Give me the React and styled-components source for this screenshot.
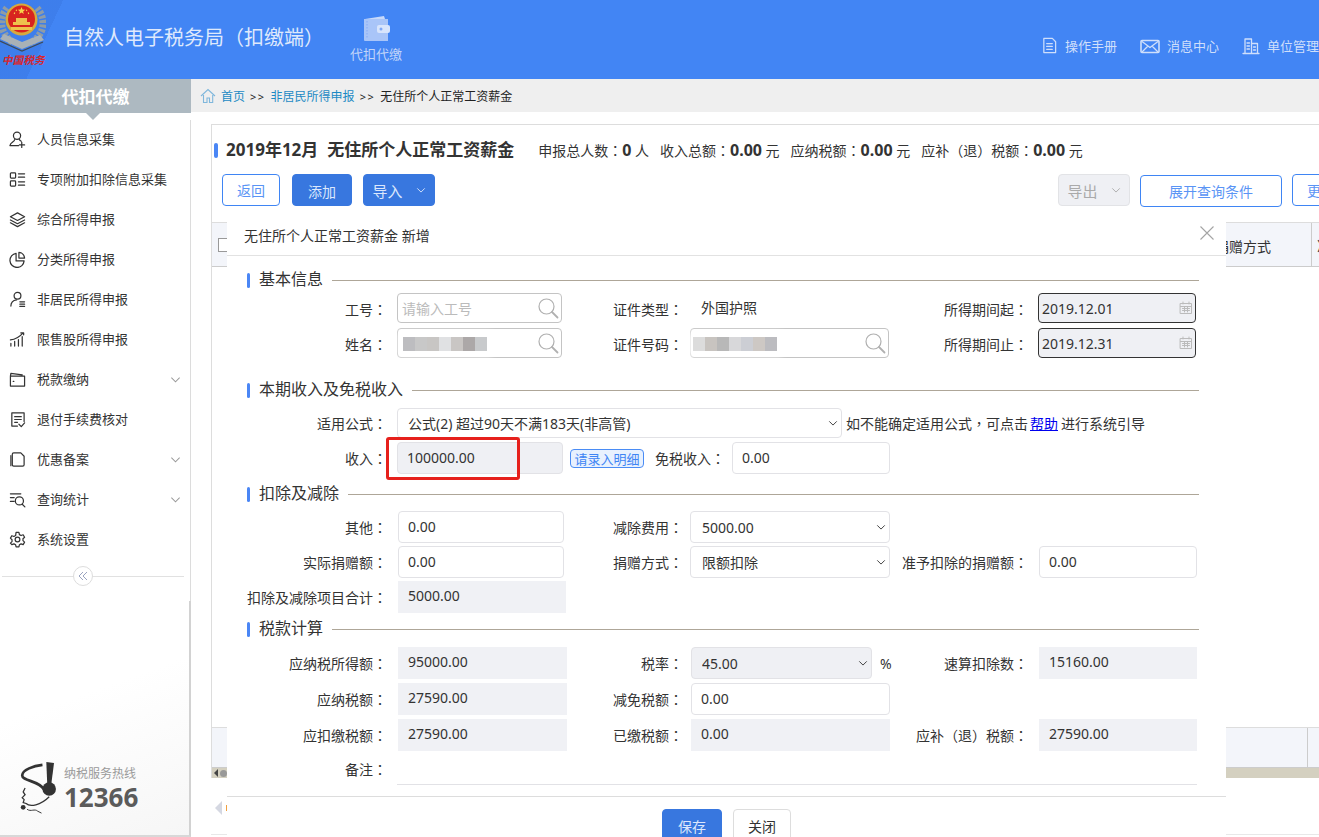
import React from "react";
import styled, { createGlobalStyle } from "styled-components";

const Global = createGlobalStyle`
  html, body { margin: 0; padding: 0; background: #fff; }
  body { font-family: "Noto Sans", "Noto Sans CJK SC", sans-serif; color: #333; font-size: 14px; overflow: hidden; }
  * { box-sizing: border-box; }
`;

const Page = styled.div`
  position: relative; width: 1319px; height: 837px; overflow: hidden; display: flex; flex-direction: column;
`;
const Header = styled.header`
  position: relative; height: 79px; flex: none; background: #4285f4; display: flex; overflow: hidden; color: #dbe7fc;
`;
const LogoBox = styled.div`
  width: 65px; flex: none; display: flex; flex-direction: column; align-items: flex-start;
  background: linear-gradient(115deg, rgba(40,90,190,.16) 62%, transparent 62%);
`;
const LogoText = styled.span`
  font-family: "Liberation Serif", "Noto Sans CJK SC", serif; font-size: 10.5px; line-height: 12px; font-weight: 700; font-style: italic;
  color: #d8262c; letter-spacing: .2px; margin: 1px 0 0 2px; white-space: nowrap;
`;
const AppTitle = styled.h1`
  margin: 0 0 0 -1px; font-size: 20px; font-weight: 400; line-height: 28px; padding-top: 24px; width: 286px; color: #dfe9fc; white-space: nowrap;
`;
const NavItem = styled.div`
  width: 52px; display: flex; flex-direction: column; align-items: center; padding-top: 16px; font-size: 13px; color: #c3d6f9; gap: 3px;
  line-height: 18px;
`;
const TopLinks = styled.div`
  margin-left: auto; display: flex; padding-top: 37px; height: 79px; width: 278px; flex: none; overflow: hidden;
`;
const TopLink = styled.div`
  display: flex; align-items: flex-start; gap: 7px; font-size: 13px; line-height: 18px; color: #cfdffb; margin-left: 23px; white-space: nowrap;
  &:first-child { margin-left: 0; }
`;
const Body = styled.div`
  flex: 1; display: flex; min-height: 0;
`;
const Sidebar = styled.aside`
  position: relative; width: 191px; flex: none; display: flex; flex-direction: column;
  background: linear-gradient(160deg, #fff 78%, #f6f6f6 100%);
`;
const SideHead = styled.div`
  position: relative; height: 34px; flex: none; background: #adb9c1; color: #fff; font-size: 17px; font-weight: 700;
  text-align: center; line-height: 34px; padding-top: 1px; margin-bottom: 7px;
  &::after {
    content: ""; position: absolute; left: 86px; top: 34px; border: 7px solid transparent; border-top-color: #adb9c1; border-bottom: 0;
  }
`;
const SideList = styled.nav`
  border-right: 1px solid #dcdcdc; height: 482px; flex: none;
`;
const SideRow = styled.div`
  height: 40px; display: flex; align-items: center; padding: 0 0 4px 9px; font-size: 13px; color: #333; gap: 11px;
  & > svg:first-child { flex: none; margin-top: 2px; }
`;
const RowChevron = styled.span`
  margin: 2px 9px 0 auto; display: flex; color: #999;
`;
const Collapse = styled.div`
  position: relative; height: 1px; margin: 16px 6px 0 2px; background: #e1e1e1;
`;
const CollapseBtn = styled.div`
  position: absolute; left: 71px; top: -10px; width: 20px; height: 20px; border-radius: 50%; background: #fff; border: 1px solid #ddd;
  color: #9aa3c0; display: flex; align-items: center; justify-content: center;
`;
const SideFoot = styled.div`
  flex: 1; border-right: 2px solid #d2d2d2; border-bottom: 2px solid #d8d8d8; display: flex; align-items: flex-end;
  padding: 0 0 19px 20px; margin-top: -1px; gap: 1px;
`;
const Hotline = styled.div`
  display: flex; flex-direction: column; margin-bottom: 8px;
  color: #9a9a9a; font-size: 12px; line-height: 14px; white-space: nowrap;
  & strong { font-size: 26px; line-height: 22px; color: #5b5b5b; font-family: "Open Sans", sans-serif; font-weight: 700; margin-top: 5px; }
`;
const Main = styled.main`
  flex: 1; min-width: 0; display: flex; flex-direction: column; overflow: hidden;
`;
const Crumbs = styled.div`
  height: 33px; flex: none; background: #efefef; display: flex; align-items: center; padding: 1px 0 0 9px; font-size: 12px; gap: 5px; white-space: nowrap;
`;
const CrumbLink = styled.span` color: #1c8ac4; `;
const CrumbSep = styled.span` color: #222; letter-spacing: 1.5px; font-size: 11px; `;
const CrumbNow = styled.span` color: #222; `;
const Panel = styled.section`
  margin: 12px 0 0 20px; flex: none; width: 1128px; display: flex; flex-direction: column;
`;
const PanelBox = styled.div`
  height: 654px; border-top: 1px solid #ddd; border-left: 1px solid #ddd; display: flex; flex-direction: column;
`;
const PanelTitle = styled.div`
  height: 49px; flex: none; display: flex; align-items: center; white-space: nowrap; padding-top: 1px;
  &::before { content: ""; width: 4px; height: 15px; margin: 0 8px 0 2px; background: #4a86f5; border-radius: 2px; }
`;
const Heading = styled.h2`
  margin: 0 24px 0 0; font-size: 17px; font-weight: 700; color: #333; line-height: 24px;
`;
const Stat = styled.span`
  font-size: 14px; margin-right: 11px; color: #333; margin-top: -1px;
  & b { font-size: 16px; font-weight: 700; }
`;
const Toolbar = styled.div`
  display: flex; height: 33px; flex: none; padding-left: 10px; gap: 12px;
`;
const Btn = styled.button`
  height: ${p => p.$h || 32}px; width: ${p => p.$w}px; border-radius: 4px; font: inherit; font-size: ${p => p.$fs || 14}px; padding: ${p => p.$pt || 0}px 0 0; flex: none;
  display: inline-flex; align-items: center; justify-content: center; gap: 13px;
  border: 1px solid ${p => p.$kind === "solid" ? "#3877df" : p.$kind === "off" ? "#e2e3e6" : p.$kind === "plain" ? "#ddd" : "#3f85f4"};
  background: ${p => p.$kind === "solid" ? "#3877df" : p.$kind === "off" ? "#eff0f4" : "#fff"};
  color: ${p => p.$kind === "solid" ? "#dbe7fc" : p.$kind === "off" ? "#aaa" : p.$kind === "plain" ? "#333" : "#5a94f5"};
  margin-left: ${p => p.$ml || 0}px; margin-top: ${p => p.$mt || 0}px;
`;
const TableHead = styled.div`
  margin-top: 15px; height: 45px; flex: none; background: #f3f5fa; border-top: 1px solid #ddd; border-bottom: 1px solid #ccc;
  display: flex; align-items: center; font-size: 14px; white-space: nowrap;
`;
const Check = styled.span`
  width: 14px; height: 14px; border: 1px solid #999; background: #fff; margin-left: 6px; flex: none;
`;
const HeadCell = styled.span`
  margin-left: 983px; width: 97px; height: 100%; border-right: 1px solid #ccc; display: flex; align-items: center; padding-top: 2px; flex: none;
  justify-content: flex-end; padding-right: 40px;
`;
const HeadCellNext = styled.span` margin-left: 5px; `;
const TableBody = styled.div` flex: 1; `;
const TableFoot = styled.div`
  height: 41px; flex: none; background: #f3f5fa; border-top: 1px solid #ddd; border-bottom: 1px solid #ccc; display: flex; justify-content: flex-end;
  padding-right: 31px;
`;
const FootCell = styled.span` width: 1px; background: #ccc; `;
const HScroll = styled.div`
  height: 10px; flex: none; background: #d4d0c0; display: flex; align-items: center; padding-left: 2px; gap: 2px;
  &::before { content: ""; border: 4px solid transparent; border-right-color: #444; border-left: 0; }
  &::after { content: ""; width: 7px; height: 7px; border-radius: 50%; background: #999; }
`;
const Pager = styled.div`
  height: 57px; display: flex; align-items: flex-start; padding: 23px 0 0 4px; gap: 4px; border-bottom: 1px solid #e8e8e8;
  &::before { content: ""; border: 7px solid transparent; border-right-color: #d5d8e2; border-left: 0; }
  &::after { content: ""; width: 3px; height: 6px; margin-top: 4px; background: #f0a040; }
`;

const Dialog = styled.div`
  position: absolute; left: 227px; top: 222px; width: 999px; height: 615px; background: #fff; display: flex; flex-direction: column;
`;
const DialogHead = styled.div`
  height: 34px; flex: none; border-bottom: 1px solid #e2e2e2; padding: 3px 0 0 17px; line-height: 22px; font-size: 14px; color: #333; position: relative;
`;
const Close = styled.span`
  position: absolute; right: 11px; top: 3px; display: flex; color: #a4a4a4;
`;
const DialogBody = styled.div`
  flex: 1; padding: 14px 27px 0 20px; border-bottom: 1px solid #ddd;
`;
const SecRow = styled.div`
  display: flex; align-items: center; height: 20px; gap: 9px; white-space: nowrap; color: #333;
  margin-top: ${p => p.$mt || 0}px; margin-bottom: ${p => p.$mb}px;
  &::before { content: ""; width: 3px; height: 15px; background: #4a86f5; border-radius: 2px; }
  &::after { content: ""; flex: 1; height: 1px; background: #aea698; }
`;
const SecText = styled.h3`
  margin: 0 0 2px; font-size: 16px; font-weight: 400; line-height: 20px;
`;
const SecTitle = ({ children, mt, mb }) => <SecRow $mt={mt} $mb={mb}><SecText>{children}</SecText></SecRow>;
const Rows = styled.div`
  display: grid; grid-template-columns: 150px 170px 123px 200px 148px 159px; row-gap: ${p => p.$gap}px; grid-auto-rows: ${p => p.$h}px; width: 950px;
  & > label { padding-top: ${p => p.$h === 30 ? 1 : 0}px; padding-bottom: ${p => p.$h === 30 ? 0 : 1}px; }
`;
const LabelText = styled.label`
  display: flex; align-items: center; justify-content: flex-end; font-size: 14px; white-space: nowrap; color: #333;
  padding-right: ${p => p.$pr ?? 10}px; margin-bottom: ${p => p.$mb || 0}px;
`;
const Colon = styled.span`
  font-family: "Noto Sans CJK TC", sans-serif;
`;
const Label = ({ children, pr, mb }) => <LabelText $pr={pr} $mb={mb}>{children}<Colon>：</Colon></LabelText>;
const Cell = styled.div`
  position: relative; grid-column: ${p => p.$span || "auto"}; width: ${p => p.$w ? p.$w + "px" : "auto"}; margin-left: ${p => p.$ml || 0}px;
  display: flex; align-items: center; min-width: 0;
`;
const Input = styled.input`
  width: 100%; height: 100%; border-radius: 4px; border: 1px solid ${p => p.$line || "#e2e2e6"}; background: ${p => p.$off ? "#eff0f4" : "#fff"};
  font: inherit; font-size: 14px; color: #333; padding: 0 ${p => p.$pad ?? 9}px ${p => p.$pb ?? 2}px; outline: none;
  &::placeholder { color: #bbb; }
`;
const Plain = styled.div`
  width: 100%; height: 100%; background: #f0f1f5; padding: 0 0 4px 10px; display: flex; align-items: center; color: #333;
`;
const ValueText = styled.span`
  padding: 0 0 2px 11px; color: #333; white-space: nowrap;
`;
const FieldIcon = styled.span`
  position: absolute; right: ${p => p.$r}px; top: 50%; transform: translateY(-50%); display: flex; color: ${p => p.$c || "#b0b0b0"}; pointer-events: none;
`;
const Select = styled.select`
  appearance: none; width: 100%; height: 100%; border-radius: 4px; border: 1px solid #e2e2e6; background: ${p => p.$off ? "#eff0f4" : "#fff"}; font: inherit; color: #333;
  padding: 0 24px 0 ${p => p.$pl ?? 10}px; outline: none;
`;
const Note = styled.span`
  font-size: 14px; white-space: nowrap; margin-left: 4px; color: #333;
  & a { color: #0000ee; text-decoration: underline; margin: 0 3px 0 2px; }
`;
const Tag = styled.span`
  height: 19px; width: 74px; border: 1px solid #4a8cf5; background: #e8f1fe; border-radius: 4px; color: #3f85f4; font-size: 13px; display: flex; align-items: center;
  justify-content: center; margin: 0 11px 0 3px; flex: none; white-space: nowrap;
`;
const InlineLabel = styled.span`
  white-space: nowrap; margin-right: 7px; flex: none; font-size: 14px;
`;
const RedBox = styled.span`
  position: absolute; left: -11px; top: -5px; width: 134px; height: 43px; border: 3px solid #e6201c; border-radius: 3px; pointer-events: none;
`;
const Mask = styled.span`
  position: absolute; left: ${p => p.$l}px; top: ${p => p.$t}px; display: flex; height: 14px; box-shadow: 0 0 6px 5px rgba(255,255,255,.9); background: #fff;
`;
const Pixel = styled.i`
  display: block; width: 12px; height: 14px; background: ${p => p.$c};
`;
const Percent = styled.span` margin-left: 8px; font-size: 14px; `;
const Remark = styled.div`
  grid-column: 2 / 7; border-bottom: 1px solid #e2e2e6; margin-bottom: 2px; width: 800px;
`;
const DialogFoot = styled.div`
  height: 40px; flex: none; display: flex; align-items: flex-start; padding: 12px 0 0 435px; gap: 11px; overflow: hidden;
`;

const S = { fill: "none", stroke: "currentColor", strokeWidth: 1.3, strokeLinecap: "round", strokeLinejoin: "round" };
const Ic = ({ size = 18, children, box = 18, ...r }) => (
  <svg width={size} height={size} viewBox={`0 0 ${box} ${box}`} {...S} {...r}>{children}</svg>
);
const Chevron = ({ size = 12, w = 1.1 }) => (
  <svg width={size} height={size} viewBox="0 0 12 12" fill="none" stroke="currentColor" strokeWidth={w}><path d="M1.5 4 6 8.5 10.5 4" /></svg>
);
const Glass = () => (
  <Ic size={22} box={22} strokeWidth={1.2}><circle cx="9.5" cy="9.5" r="7.5" /><path d="M15 15l5.5 5.5" strokeWidth="1.8" /></Ic>
);
const Calendar = () => (
  <Ic size={14} box={14} strokeWidth={1}><rect x="1.5" y="2.5" width="11" height="10" /><path d="M1.5 5.5h11M4 1v2M10 1v2M3.5 7.5h7M3.5 9.5h7M5.5 6v5M8.5 6v5" /></Ic>
);

const sideIcons = {
  user: <><circle cx="8.500" cy="5" r="3.800" /><path d="M6 9c0 2.500-4.500 3-5 6.500h9M11 9c.3.800 1 1.400 2 1.800M13.500 12v5.500M11 14.800h5.500" /></>,
  list: <><rect x="1.500" y="2" width="5.500" height="5.500" rx=".8" /><rect x="1.500" y="10.500" width="5.500" height="5.500" rx=".8" /><path d="M10 3h6.500M10 6.500h6.500M10 11.500h6.500M10 15h6.500" /></>,
  layers: <><path d="M9 2l7.500 4L9 10 1.500 6z" /><path d="M1.500 9.500L9 13.500l7.500-4M1.500 12.500L9 16.500l7.500-4" /></>,
  pie: <><path d="M7.500 2.500A7.500 7.500 0 1 0 16 10.500H7.500z" /><path d="M10.500 1.500A6.500 6.500 0 0 1 16.500 7.500H10.500z" /></>,
  person: <><circle cx="9" cy="5" r="3.600" /><path d="M2 16c0-3.500 2.500-6 6-6.500M11.500 11.500h5M11.500 14h5M11.500 16.300h5" /></>,
  bars: <><path d="M2 16v-3M6 16v-5M10 16V9M14 16V6M1.500 9.500C6 9 11 6.500 15 2M12.500 2H15.500V4" /></>,
  wallet: <><path d="M1.500 5.500v10.500h15V5.500H1.500zM1.500 5.500L2 2.500l12 1.500" /><path d="M4.500 11h.6" /></>,
  check: <><path d="M9 16H3V2h13v9M6 6h7M6 9h7M6 12h3M10.500 14l2.500 2.500 3.500-4" /></>,
  copy: <><path d="M5 2h7.500L16 5.500V14.500a1.500 1.500 0 0 1-1.500 1.500H5A1.500 1.500 0 0 1 3.500 14.500V3.500A1.500 1.500 0 0 1 5 2z" /><path d="M2 5v10.500" /></>,
  search: <><path d="M1.500 3h11M1.500 7h4M1.500 11h4" /><circle cx="11" cy="10.500" r="4.300" /><path d="M14 14l2.800 2.800" /></>,
  gear: <><circle cx="9" cy="9" r="2.500" /><path d="M7.500 1.500h3l.5 2.300 1.800 1 2.200-.8 1.500 2.600-1.700 1.600v2l1.700 1.600-1.500 2.600-2.200-.8-1.800 1-.5 2.300h-3l-.5-2.300-1.800-1-2.200.8L1.500 12.800l1.700-1.600v-2L1.500 7.600 3 5l2.200.8 1.800-1z" /></>,
};
const menu = [
  ["user", "人员信息采集"], ["list", "专项附加扣除信息采集"], ["layers", "综合所得申报"], ["pie", "分类所得申报"],
  ["person", "非居民所得申报"], ["bars", "限售股所得申报"], ["wallet", "税款缴纳", true], ["check", "退付手续费核对"],
  ["copy", "优惠备案", true], ["search", "查询统计", true], ["gear", "系统设置"],
];

const Emblem = () => (
  <svg width="46" height="54" viewBox="0 0 46 54">
    <path d="M7 8C-1 18 -1 34 14 43M37 8C46 18 46 34 30 43" fill="none" stroke="#8f9ca6" strokeWidth="7" strokeDasharray="3 1.500" />
    <path d="M0 39l22 10 22-9-4-5-18 7-18-8z" fill="#a9b1b6" />
    <path d="M0 41l22 10 21-9" fill="none" stroke="#3f4a55" strokeWidth="1.200" />
    <circle cx="21.500" cy="19.500" r="16" fill="#d7a93c" />
    <circle cx="21.500" cy="19" r="13.500" fill="#d8231f" />
    <path d="M21.500 7l1 2.600 2.700.1-2.100 1.700.7 2.600-2.300-1.500-2.300 1.500.7-2.600-2.100-1.700 2.700-.1z" fill="#f6d44a" />
    <path d="M14 13l1 .5M29 13l-1 .5M16 10l.8.6M27 10l-.8.6" stroke="#f6d44a" strokeWidth="1.500" />
    <path d="M13 22h17v3H13zM11 27h21v3H11zM16 18h11v4H16z" fill="#eec24d" />
  </svg>
);
const Wallet = () => (
  <svg width="28" height="26" viewBox="0 0 28 26" fill="none">
    <path d="M2 3h24v22H3a1 1 0 0 1-1-1z" fill="#a9c5f8" />
    <path d="M3 3l19-3 1 3z" fill="#c7d9fa" />
    <rect x="15" y="9" width="13" height="8" rx="2" fill="#d8e5fc" />
    <circle cx="19" cy="13" r="1.500" fill="#7fa8f6" />
    <path d="M5 5v18" stroke="#86aaf6" strokeDasharray="1.500 1.500" />
  </svg>
);
const Hot = () => (
  <svg width="43" height="54" viewBox="0 0 44 56" fill="none">
    <path d="M27 0l8 1-3 23h-4z" fill="#333" />
    <circle cx="30" cy="28" r="7" fill="#333" />
    <path d="M23 3C14 4 2 8 2 14c0 6 18 5 23 15" stroke="#333" strokeWidth="2.800" />
    <path d="M5 27l-2 4 2 3-3 3 2 2-1 3 3 1c4 4 15 2 24-7" stroke="#333" strokeWidth="1.300" />
    <circle cx="3" cy="47" r="2.500" fill="#333" />
    <path d="M7 49c4 3 8-1 11 2l4 2" stroke="#333" strokeWidth="1" />
  </svg>
);

const Blur = ({ l, t, colors }) => (
  <Mask $l={l} $t={t}>{colors.map((c, i) => <Pixel key={i} $c={c} />)}</Mask>
);

export default function App() {
  return (
    <Page>
      <Global />
      <Header>
        <LogoBox><Emblem /><LogoText>中国税务</LogoText></LogoBox>
        <AppTitle>自然人电子税务局（扣缴端）</AppTitle>
        <NavItem><Wallet />代扣代缴</NavItem>
        <TopLinks>
          <TopLink><Ic size={17} box={18}><path d="M3 1.500h9l3.500 3.500v11.500H3z" /><path d="M6 7h6M6 10h6M6 13h6" /></Ic>操作手册</TopLink>
          <TopLink><Ic size={20} box={20}><rect x="1" y="3.500" width="18" height="12" rx="1" strokeWidth="1.600" /><path d="M2 4.500l8 6 8-6M2 15l6-6M18 15l-6-6" /></Ic>消息中心</TopLink>
          <TopLink><Ic size={18} box={18}><path d="M1 16.500h16M3 16.500V2h6.500v14.500M9.500 6.500h6v10M5 6h2.500M5 9h2.500M5 12h2.500M11.500 10h2M11.500 13h2" /></Ic>单位管理</TopLink>
        </TopLinks>
      </Header>
      <Body>
        <Sidebar>
          <SideHead>代扣代缴</SideHead>
          <SideList>
            {menu.map(([k, t, more]) => (
              <SideRow key={t}>
                <Ic size={17}>{sideIcons[k]}</Ic>
                {t}
                {more && <RowChevron><Chevron size={11} /></RowChevron>}
              </SideRow>
            ))}
            <Collapse>
              <CollapseBtn><svg width="10" height="10" viewBox="0 0 10 10" fill="none" stroke="currentColor" strokeWidth="1"><path d="M5 1L1 5l4 4M9 1L5 5l4 4" /></svg></CollapseBtn>
            </Collapse>
          </SideList>
          <SideFoot>
            <Hot />
            <Hotline>纳税服务热线<strong>12366</strong></Hotline>
          </SideFoot>
        </Sidebar>
        <Main>
          <Crumbs>
            <svg width="16" height="16" viewBox="0 0 16 16" fill="none" stroke="#7fb7dc" strokeWidth="1.100"><path d="M1 8l7-6.500L15 8M3.500 7v7.500H7V10h2.500v4.500h3.200V7" /></svg>
            <CrumbLink>首页</CrumbLink><CrumbSep>&gt;&gt;</CrumbSep>
            <CrumbLink>非居民所得申报</CrumbLink><CrumbSep>&gt;&gt;</CrumbSep>
            <CrumbNow>无住所个人正常工资薪金</CrumbNow>
          </Crumbs>
          <Panel>
            <PanelBox>
              <PanelTitle>
                <Heading>2019年12月&nbsp;&nbsp;无住所个人正常工资薪金</Heading>
                <Stat>申报总人数<Colon>：</Colon><b>0</b> 人</Stat>
                <Stat>收入总额<Colon>：</Colon><b>0.00</b> 元</Stat>
                <Stat>应纳税额<Colon>：</Colon><b>0.00</b> 元</Stat>
                <Stat>应补（退）税额<Colon>：</Colon><b>0.00</b> 元</Stat>
              </PanelTitle>
              <Toolbar>
                <Btn $w={58}>返回</Btn>
                <Btn $w={60} $kind="solid" $pt={2}>添加</Btn>
                <Btn $w={72} $kind="solid" $ml={-1} $fs={15}>导入<Chevron size={10} /></Btn>
                <Btn $w={72} $kind="off" $ml={611} $fs={15}>导出<Chevron size={10} /></Btn>
                <Btn $w={142} $mt={1} $ml={-2}>展开查询条件</Btn>
                <Btn $w={58} $ml={-2}>更多</Btn>
              </Toolbar>
              <TableHead>
                <Check />
                <HeadCell>捐赠方式</HeadCell>
                <HeadCellNext>准</HeadCellNext>
              </TableHead>
              <TableBody />
              <TableFoot><FootCell /></TableFoot>
              <HScroll />
            </PanelBox>
            <Pager />
          </Panel>
        </Main>
      </Body>
      <Dialog>
        <DialogHead>
          无住所个人正常工资薪金 新增
          <Close><svg width="16" height="16" viewBox="0 0 16 16" stroke="currentColor" fill="none" strokeWidth="1.100"><path d="M1.500 1.500l13 13M14.500 1.500l-13 13" /></svg></Close>
        </DialogHead>
        <DialogBody>
          <SecTitle mb={3}>基本信息</SecTitle>
          <Rows $gap={5} $h={30}>
            <Label>工号</Label>
            <Cell $w={165}><Input $line="#c4c4c4" $pad={4} $pb={0} placeholder="请输入工号" /><FieldIcon $r={3}><Glass /></FieldIcon></Cell>
            <Label pr={7}>证件类型</Label>
            <Cell><ValueText>外国护照</ValueText></Cell>
            <Label>所得期间起</Label>
            <Cell $w={158}><Input $off $line="#333" $pad={3} $pb={0} defaultValue="2019.12.01" /><FieldIcon $r={3} $c="#bbb"><Calendar /></FieldIcon></Cell>
            <Label>姓名</Label>
            <Cell $w={165}><Input $line="#c4c4c4" /><FieldIcon $r={3}><Glass /></FieldIcon><Blur l={6} t={9} colors={["#bdbdc0", "#c8c8c8", "#c8c6c4", "#e0e1e3", "#c9c6c4", "#aca8a8", "#c8cacc"]} /></Cell>
            <Label pr={7}>证件号码</Label>
            <Cell $w={199}><Input $line="#c4c4c4" /><FieldIcon $r={3}><Glass /></FieldIcon><Blur l={3} t={9} colors={["#dcdcdc", "#c8c4c0", "#b8b8b8", "#d8d8da", "#ccced4", "#cdc8c4", "#bcbcc0"]} /></Cell>
            <Label>所得期间止</Label>
            <Cell $w={158}><Input $off $line="#333" $pad={3} $pb={0} defaultValue="2019.12.31" /><FieldIcon $r={3} $c="#bbb"><Calendar /></FieldIcon></Cell>
          </Rows>
          <SecTitle mt={22} mb={8}>本期收入及免税收入</SecTitle>
          <Rows $gap={2} $h={32}>
            <Label mb={2}>适用公式</Label>
            <Cell $span="2 / 7" style={{ height: 30 }}>
              <Cell $w={445} style={{ height: "100%", flex: "none" }}>
                <Select defaultValue="a"><option value="a">公式(2) 超过90天不满183天(非高管)</option></Select>
                <FieldIcon $r={4} $c="#333"><Chevron size={10} /></FieldIcon>
              </Cell>
              <Note>如不能确定适用公式<Colon>，</Colon>可点击<a href="#help">帮助</a>进行系统引导</Note>
            </Cell>
            <Label>收入</Label>
            <Cell $w={166}><Input $off $pad={9} defaultValue="100000.00" /><RedBox /></Cell>
            <Cell $span="3 / 5">
              <Tag>请录入明细</Tag>
              <InlineLabel>免税收入<Colon>：</Colon></InlineLabel>
              <Input defaultValue="0.00" />
            </Cell>
          </Rows>
          <SecTitle mt={10} mb={7}>扣除及减除</SecTitle>
          <Rows $gap={3} $h={32}>
            <Label>其他</Label>
            <Cell $w={166} $ml={1}><Input defaultValue="0.00" /></Cell>
            <Label pr={7}>减除费用</Label>
            <Cell><Select $pl={11} defaultValue="a"><option value="a">5000.00</option></Select><FieldIcon $r={4} $c="#333"><Chevron size={10} /></FieldIcon></Cell>
            <span />
            <span />
            <Label>实际捐赠额</Label>
            <Cell $w={166} $ml={1}><Input defaultValue="0.00" /></Cell>
            <Label pr={7}>捐赠方式</Label>
            <Cell><Select $pl={11} defaultValue="a"><option value="a">限额扣除</option></Select><FieldIcon $r={4} $c="#333"><Chevron size={10} /></FieldIcon></Cell>
            <Label>准予扣除的捐赠额</Label>
            <Cell $ml={1}><Input defaultValue="0.00" /></Cell>
            <Label>扣除及减除项目合计</Label>
            <Cell $ml={1} $w={168}><Plain>5000.00</Plain></Cell>
          </Rows>
          <SecTitle mt={6} mb={8}>税款计算</SecTitle>
          <Rows $gap={4} $h={32}>
            <Label>应纳税所得额</Label>
            <Cell $ml={1}><Plain>95000.00</Plain></Cell>
            <Label pr={7}>税率</Label>
            <Cell><Cell $w={181} $ml={1} style={{ height: "100%", flex: "none" }}><Select $off defaultValue="a"><option value="a">45.00</option></Select><FieldIcon $r={4} $c="#333"><Chevron size={10} /></FieldIcon></Cell><Percent>%</Percent></Cell>
            <Label>速算扣除数</Label>
            <Cell $ml={1}><Plain>15160.00</Plain></Cell>
            <Label>应纳税额</Label>
            <Cell $ml={1}><Plain>27590.00</Plain></Cell>
            <Label pr={7}>减免税额</Label>
            <Cell $ml={1}><Input defaultValue="0.00" /></Cell>
            <span />
            <span />
            <Label>应扣缴税额</Label>
            <Cell $ml={1}><Plain>27590.00</Plain></Cell>
            <Label pr={7}>已缴税额</Label>
            <Cell $ml={1}><Plain>0.00</Plain></Cell>
            <Label>应补（退）税额</Label>
            <Cell $ml={1}><Plain>27590.00</Plain></Cell>
            <Label mb={4}>备注</Label>
            <Remark />
          </Rows>
        </DialogBody>
        <DialogFoot>
          <Btn $w={60} $h={34} $kind="solid">保存</Btn>
          <Btn $w={58} $h={34} $kind="plain">关闭</Btn>
        </DialogFoot>
      </Dialog>
    </Page>
  );
}
